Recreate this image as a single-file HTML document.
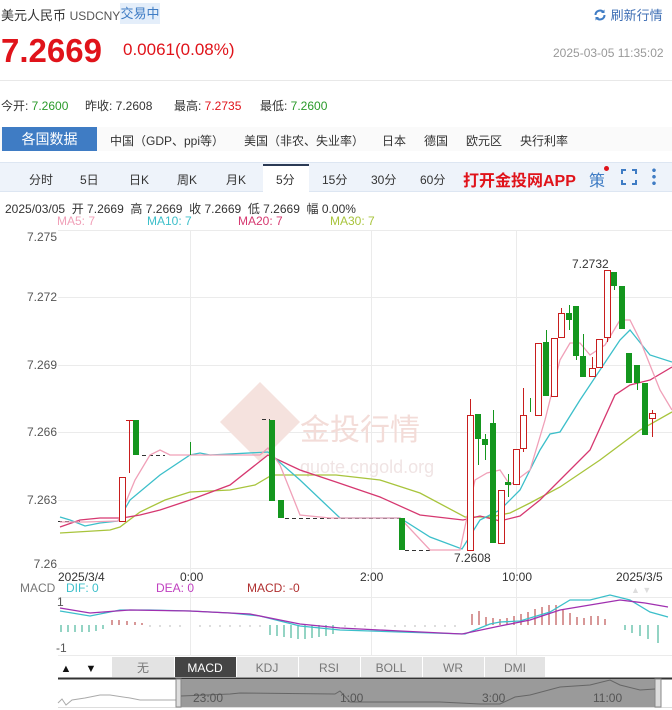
<!DOCTYPE html>
<html><head><meta charset="utf-8"><style>
*{margin:0;padding:0;box-sizing:border-box}
body{width:672px;height:710px;overflow:hidden;background:#fff;font-family:"Liberation Sans","Noto Sans CJK SC",sans-serif;color:#333;position:relative}
.a{position:absolute;white-space:nowrap}
</style></head><body>
<div class="a" style="left:1px;top:5px;font-size:13px;color:#333">美元人民币 <span style="font-size:12px;color:#555">USDCNY</span></div>
<div class="a" style="left:120px;top:3px;width:40px;height:21px;background:#e4eefa;color:#3f7cc4;font-size:13px;line-height:21px;text-align:center">交易中</div>
<div class="a" style="left:593px;top:5px;font-size:13px;color:#3f6fb5"><svg width="14" height="14" viewBox="0 0 14 14" style="vertical-align:-2px"><path d="M2.5 7a4.5 4.5 0 0 1 8-2.8M11.5 7a4.5 4.5 0 0 1-8 2.8" stroke="#3f7cc4" stroke-width="2" fill="none"/><path d="M11.5 1.5v3.5h-3.5z" fill="#3f7cc4"/><path d="M2.5 12.5v-3.5h3.5z" fill="#3f7cc4"/></svg> 刷新行情</div>
<div class="a" style="left:1px;top:32px;font-size:33px;font-weight:bold;color:#e0131a">7.2669</div>
<div class="a" style="left:123px;top:40px;font-size:17px;color:#e0131a">0.0061(0.08%)</div>
<div class="a" style="left:553px;top:46px;font-size:12px;color:#999">2025-03-05 11:35:02</div>
<div class="a" style="left:0;top:80px;width:672px;height:1px;background:#e8e8e8"></div>
<div class="a" style="left:1px;top:97px;font-size:12px;color:#333">今开: <span style="color:#2a9a2a">7.2600</span></div>
<div class="a" style="left:85px;top:97px;font-size:12px;color:#333">昨收: 7.2608</div>
<div class="a" style="left:174px;top:97px;font-size:12px;color:#333">最高: <span style="color:#e0131a">7.2735</span></div>
<div class="a" style="left:260px;top:97px;font-size:12px;color:#333">最低: <span style="color:#2a9a2a">7.2600</span></div>
<div class="a" style="left:0;top:127px;width:672px;height:24px;background:#fafafa"></div>
<div class="a" style="left:2px;top:127px;width:95px;height:24px;background:#3f7cc4;color:#fff;font-size:14px;line-height:24px;text-align:center">各国数据</div>
<div class="a" style="left:110px;top:132px;font-size:12px;color:#333">中国（GDP、ppi等）</div>
<div class="a" style="left:244px;top:132px;font-size:12px;color:#333">美国（非农、失业率）</div>
<div class="a" style="left:382px;top:132px;font-size:12px;color:#333">日本</div>
<div class="a" style="left:424px;top:132px;font-size:12px;color:#333">德国</div>
<div class="a" style="left:466px;top:132px;font-size:12px;color:#333">欧元区</div>
<div class="a" style="left:520px;top:132px;font-size:12px;color:#333">央行利率</div>
<div class="a" style="left:0;top:162px;width:672px;height:30px;background:#eef3fa;border-top:1px solid #dde6f2;border-bottom:1px solid #dde6f2"></div>
<div class="a" style="left:263px;top:164px;width:46px;height:28px;background:#fff;border-top:2px solid #2b3a55"></div>
<div class="a" style="left:0;top:171px;font-size:12px;color:#333;width:672px">
<span class="a" style="left:29px">分时</span><span class="a" style="left:80px">5日</span><span class="a" style="left:129px">日K</span><span class="a" style="left:177px">周K</span><span class="a" style="left:226px">月K</span><span class="a" style="left:276px">5分</span><span class="a" style="left:322px">15分</span><span class="a" style="left:371px">30分</span><span class="a" style="left:420px">60分</span></div>
<div class="a" style="left:463px;top:167px;font-size:16px;font-weight:bold;color:#e0131a">打开金投网APP</div>
<div class="a" style="left:589px;top:167px;font-size:16px;color:#3f7cc4">策</div>
<div class="a" style="left:604px;top:166px;width:5px;height:5px;border-radius:50%;background:#e0131a"></div>
<svg class="a" style="left:620px;top:168px" width="18" height="18" viewBox="0 0 18 18"><path d="M2 6V2h4M12 2h4v4M16 12v4h-4M6 16H2v-4" stroke="#3f7cc4" stroke-width="2" fill="none"/></svg>
<div class="a" style="left:652px;top:167px;width:4px;height:18px;background:radial-gradient(circle,#3f7cc4 1.6px,transparent 2px) 0 0/4px 6.5px"></div>
<div class="a" style="left:5px;top:200px;font-size:12px;color:#333">2025/03/05 &nbsp;开 7.2669 &nbsp;高 7.2669 &nbsp;收 7.2669 &nbsp;低 7.2669 &nbsp;幅 0.00%</div>
<div class="a" style="left:0;top:214px;font-size:12px">
<span class="a" style="left:57px;color:#f0a0b8">MA5: 7</span><span class="a" style="left:147px;color:#3cbfca">MA10: 7</span><span class="a" style="left:238px;color:#d63870">MA20: 7</span><span class="a" style="left:330px;color:#a8c43c">MA30: 7</span></div>
<svg class="a" style="left:0;top:0" width="672" height="710" viewBox="0 0 672 710" font-family="Liberation Sans, sans-serif">
<g stroke="#ebebeb" stroke-width="1">
<line x1="58" y1="230.5" x2="672" y2="230.5"/><line x1="58" y1="297.5" x2="672" y2="297.5"/><line x1="58" y1="365.5" x2="672" y2="365.5"/><line x1="58" y1="432.5" x2="672" y2="432.5"/><line x1="58" y1="500.5" x2="672" y2="500.5"/><line x1="58" y1="568.5" x2="672" y2="568.5"/>
<line x1="190.5" y1="230" x2="190.5" y2="655"/><line x1="371.5" y1="230" x2="371.5" y2="655"/><line x1="516.5" y1="230" x2="516.5" y2="655"/>
<line x1="58" y1="597.5" x2="672" y2="597.5"/><line x1="58" y1="655.5" x2="672" y2="655.5"/>
</g>
<g font-size="12" fill="#555" text-anchor="end">
<text x="57" y="241">7.275</text><text x="57" y="301">7.272</text><text x="57" y="369">7.269</text><text x="57" y="436">7.266</text><text x="57" y="504">7.263</text><text x="57" y="568">7.26</text></g>
<text x="300" y="440" font-size="30" fill="#f3dcd8" font-family="Noto Sans CJK SC">金投行情</text>
<text x="300" y="473" font-size="18" fill="#f0e4e4">quote.cngold.org</text>
<path d="M260 382l40 40-40 40-40-40z" fill="#f5e2de"/>
<g stroke-dasharray="4,3" stroke="#333" stroke-width="1">
<line x1="142" y1="455.5" x2="165" y2="455.5"/><line x1="285" y1="518.5" x2="400" y2="518.5"/><line x1="405" y1="550.5" x2="432" y2="550.5"/><line x1="58" y1="521.5" x2="80" y2="521.5"/><line x1="262" y1="419.5" x2="270" y2="419.5"/></g>
<g fill="none" stroke-width="1.3">
<polyline stroke="#a8c43c" points="60,533 110,530 120,527 140,512 165,500 190,492 230,490 255,485 272,475 290,475 336,475 380,480 420,493 465,517 490,517 510,513 530,503 560,487 600,460 640,430 672,412"/>
<polyline stroke="#d63870" points="60,527 80,520 100,518 122,518 140,515 160,510 190,500 230,485 268,455 300,470 336,482 380,497 420,515 463,520 480,516 500,521 520,516 540,500 560,480 590,450 615,395 630,385 650,380 672,367"/>
<polyline stroke="#3cbfca" points="60,517 70,520 85,526 100,523 118,521 130,500 160,475 190,455 200,453 210,455 268,452 300,480 340,518 400,518 430,537 462,549 480,520 500,510 520,490 540,450 550,434 560,432 580,400 600,370 620,340 630,330 650,355 672,362"/>
<polyline stroke="#f0a0b8" points="60,522 85,522 118,521 135,480 150,455 160,450 170,455 260,455 268,448 280,465 290,490 300,515 330,518 400,518 430,550 460,550 475,480 487,473 500,470 510,485 530,470 545,420 560,360 570,343 580,343 590,355 605,345 620,320 630,320 640,340 660,390 672,410"/>
</g>
<g stroke="#c81e1e" stroke-width="1">
<line x1="129.5" y1="420" x2="129.5" y2="473"/><line x1="126" y1="420.5" x2="133" y2="420.5"/>
<line x1="470.5" y1="399" x2="470.5" y2="415"/><line x1="523.5" y1="388" x2="523.5" y2="452"/><line x1="561.5" y1="308" x2="561.5" y2="313"/><line x1="592.5" y1="357" x2="592.5" y2="368"/><line x1="607.5" y1="337" x2="607.5" y2="342"/><line x1="652.5" y1="410" x2="652.5" y2="437"/>
</g>
<g fill="#fff" stroke="#c81e1e" stroke-width="1">
<rect x="119.5" y="477.5" width="6" height="44"/><rect x="467.5" y="415.5" width="6" height="135"/><rect x="498.5" y="490.5" width="6" height="53"/><rect x="513.5" y="449.5" width="6" height="35"/><rect x="520.5" y="415.5" width="6" height="33"/><rect x="535.5" y="343.5" width="6" height="72"/><rect x="551.5" y="338.5" width="6" height="58"/><rect x="558.5" y="313.5" width="6" height="24"/><rect x="589.5" y="368.5" width="6" height="8"/><rect x="596.5" y="339.5" width="6" height="28"/><rect x="604.5" y="270.5" width="6" height="67"/><rect x="649.5" y="413.5" width="6" height="5"/>
</g>
<g stroke="#14961e" stroke-width="1">
<line x1="190.5" y1="442" x2="190.5" y2="455"/><line x1="478.5" y1="439" x2="478.5" y2="465"/><line x1="485.5" y1="434" x2="485.5" y2="460"/><line x1="493.5" y1="410" x2="493.5" y2="423"/><line x1="508.5" y1="474" x2="508.5" y2="497"/><line x1="530.5" y1="398" x2="530.5" y2="412"/><line x1="546.5" y1="330" x2="546.5" y2="342"/><line x1="569.5" y1="305" x2="569.5" y2="330"/><line x1="576.5" y1="356" x2="576.5" y2="360"/><line x1="583.5" y1="334" x2="583.5" y2="356"/><line x1="614.5" y1="286" x2="614.5" y2="290"/><line x1="637.5" y1="383" x2="637.5" y2="390"/>
</g>
<g fill="#14961e">
<rect x="133" y="420" width="6" height="35"/><rect x="269" y="420" width="6" height="81"/><rect x="278" y="500" width="6" height="18"/><rect x="399" y="518" width="6" height="32"/><rect x="475" y="414" width="6" height="25"/><rect x="482" y="439" width="6" height="6"/><rect x="490" y="423" width="6" height="120"/><rect x="505" y="482" width="6" height="3"/><rect x="543" y="342" width="6" height="54"/><rect x="566" y="313" width="6" height="7"/><rect x="573" y="306" width="6" height="50"/><rect x="580" y="356" width="6" height="21"/><rect x="611" y="272" width="6" height="14"/><rect x="619" y="286" width="6" height="43"/><rect x="626" y="353" width="6" height="30"/><rect x="634" y="365" width="6" height="18"/><rect x="642" y="383" width="6" height="52"/>
</g>
<text x="572" y="268" font-size="12" fill="#333">7.2732</text>
<text x="454" y="562" font-size="12" fill="#333">7.2608</text>
<g font-size="12" fill="#333"><text x="58" y="581">2025/3/4</text><text x="180" y="581">0:00</text><text x="360" y="581">2:00</text><text x="502" y="581">10:00</text><text x="616" y="581">2025/3/5</text></g>
<g font-size="12"><text x="20" y="592" fill="#777">MACD</text><text x="66" y="592" fill="#3cbfca">DIF: 0</text><text x="156" y="592" fill="#c040c0">DEA: 0</text><text x="247" y="592" fill="#b03030">MACD: -0</text>
<text x="57" y="606" fill="#555">1</text><text x="56" y="652" fill="#555">-1</text></g>
<text x="631" y="593" font-size="9" fill="#ddd">▲ ▼</text>
<g stroke="#2aa88a" stroke-width="1">
<path d="M61 625v7M68 625v7M75 625v7M82 625v7M89 625v7M96 625v6M103 625v4M270 625v10M277 625v11M284 625v12M291 625v13M298 625v14M305 625v14M312 625v13M319 625v12M326 625v11M333 625v9M625 625v5M632 625v8M640 625v11M648 625v14M658 625v18"/>
</g>
<g stroke="#b03030" stroke-width="1"><path d="M112 625v-5M119 625v-5M127 625v-4M135 625v-3M142 625v-2M472 625v-11M479 625v-14M486 625v-8M493 625v-7M500 625v-6M507 625v-7M514 625v-9M521 625v-11M528 625v-13M535 625v-16M542 625v-18M549 625v-20M556 625v-20M563 625v-16M570 625v-12M577 625v-8M584 625v-7M591 625v-9M598 625v-9M605 625v-6"/></g>
<g stroke="#bbb" stroke-width="1"><path d="M150 625v2M160 625v2M170 625v2M180 625v2M200 625v2M210 625v2M220 625v2M230 625v2M240 625v2M250 625v2M260 625v2M345 625v2M355 625v2M365 625v2M375 625v2M385 625v2M395 625v2M405 625v2M415 625v2M425 625v2M435 625v2M445 625v2M455 625v2"/></g>
<polyline fill="none" stroke="#3cbfca" stroke-width="1.3" points="60,611 90,616 120,610 150,610 190,611 230,613 260,616 300,626 340,630 400,632 465,634 490,624 500,622 520,621 550,612 570,600 590,600 610,595 630,600 650,612 668,617"/>
<polyline fill="none" stroke="#a030b0" stroke-width="1.3" points="60,608 90,613 130,610 190,611 250,614 300,624 340,628 400,631 462,634 500,626 530,620 560,610 590,605 620,600 645,603 668,607"/>
<rect x="112" y="657" width="433" height="20" fill="#e3e3e3"/>
<rect x="174" y="657" width="62" height="20" fill="#444"/>
<g stroke="#fff"><line x1="174.5" y1="657" x2="174.5" y2="677"/><line x1="298.5" y1="657" x2="298.5" y2="677"/><line x1="360.5" y1="657" x2="360.5" y2="677"/><line x1="422.5" y1="657" x2="422.5" y2="677"/><line x1="484.5" y1="657" x2="484.5" y2="677"/><line x1="236.5" y1="657" x2="236.5" y2="677"/></g>
<g font-size="12" text-anchor="middle" fill="#777"><text x="143" y="672">无</text><text x="205" y="672" fill="#fff">MACD</text><text x="267" y="672">KDJ</text><text x="329" y="672">RSI</text><text x="391" y="672">BOLL</text><text x="453" y="672">WR</text><text x="515" y="672">DMI</text></g>
<text x="66" y="672" font-size="11" fill="#111" text-anchor="middle">▲</text><text x="91" y="672" font-size="11" fill="#111" text-anchor="middle">▼</text>
<line x1="58" y1="678.5" x2="672" y2="678.5" stroke="#333" stroke-width="2"/>
<line x1="58" y1="707.5" x2="672" y2="707.5" stroke="#ddd"/>
<polyline fill="none" stroke="#aaa" points="58,703 62,699 66,705 72,700 85,698 100,695 110,695 130,698 140,700 176,700"/>
<rect x="176" y="679" width="485" height="28" fill="#9a9a9a"/>
<rect x="176" y="679" width="5" height="28" fill="#ddd" stroke="#888"/><rect x="655" y="679" width="6" height="28" fill="#ddd" stroke="#888"/>
<polyline fill="none" stroke="#666" points="181,696 230,694 240,693 335,694 340,691 350,702 440,702 480,704 500,704 515,697 530,695 560,687 590,685 610,680 620,685 640,690 655,689"/>
<g font-size="12" fill="#555"><text x="193" y="702">23:00</text><text x="340" y="702">1:00</text><text x="482" y="702">3:00</text><text x="593" y="702">11:00</text></g>
</svg>
</body></html>
